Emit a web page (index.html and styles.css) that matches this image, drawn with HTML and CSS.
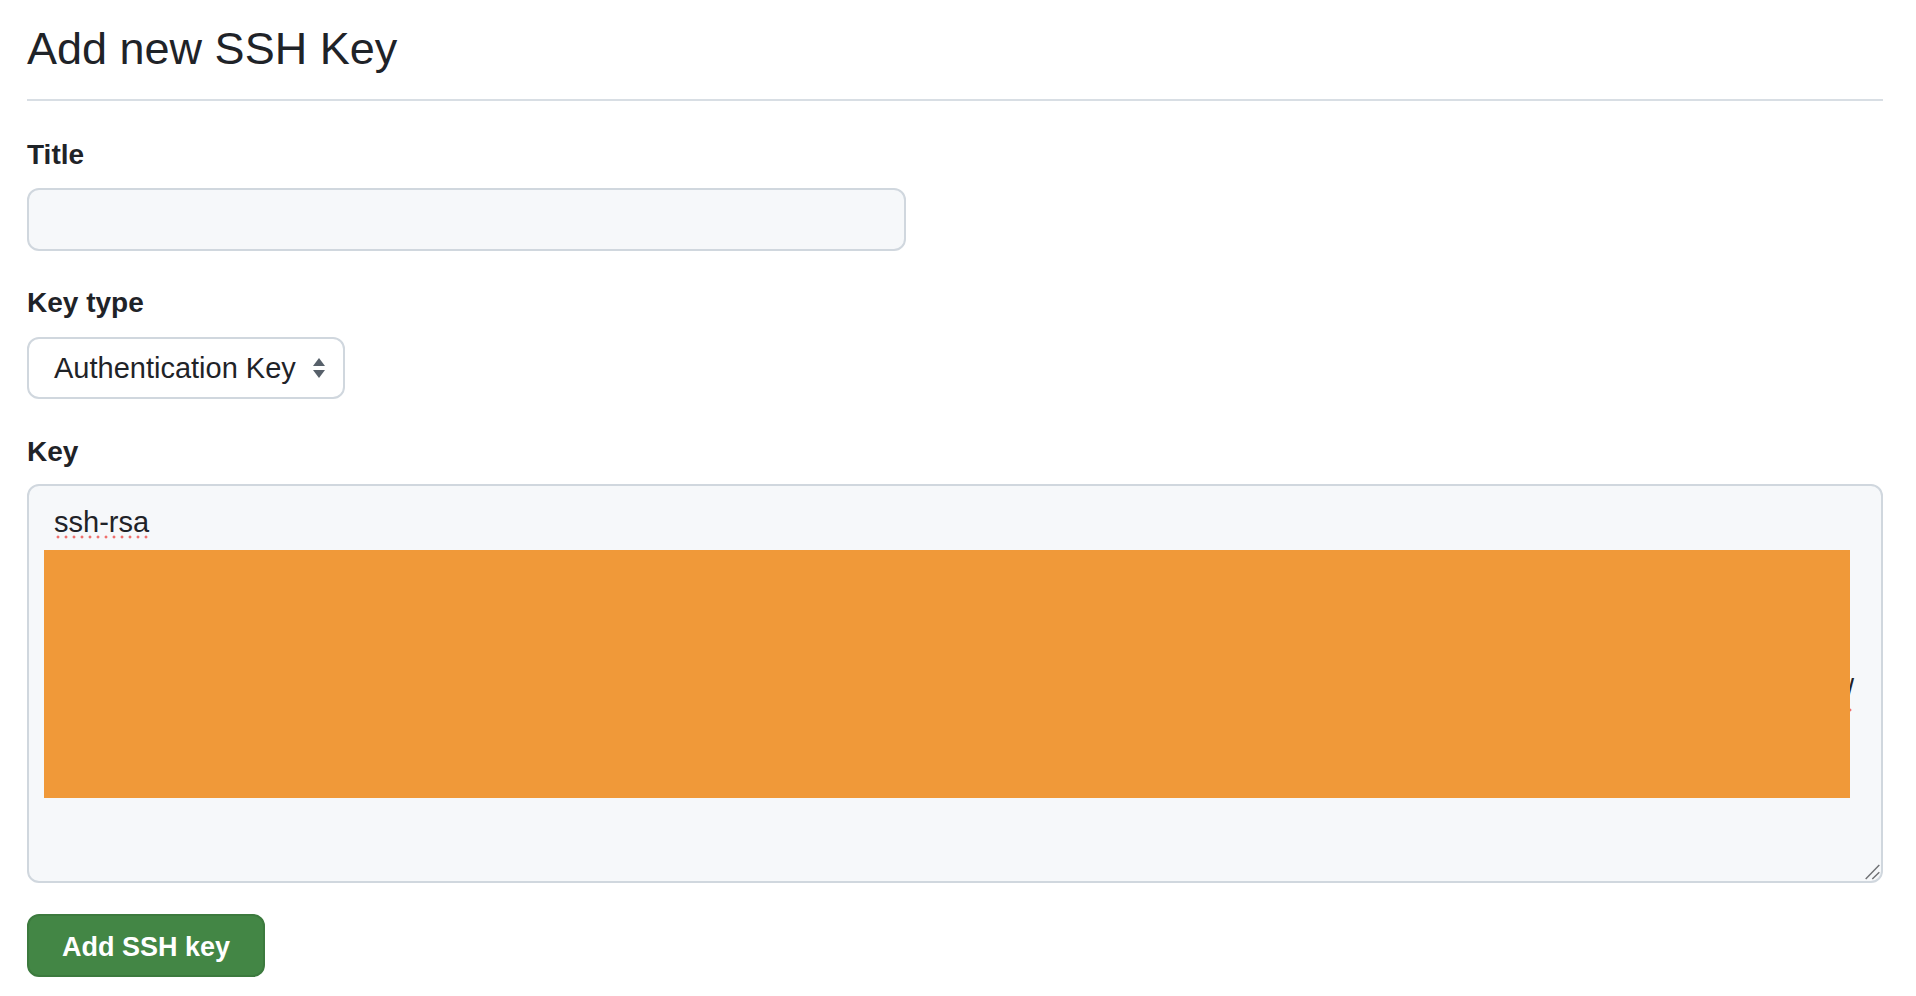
FILE: index.html
```html
<!DOCTYPE html>
<html lang="en">
<head>
<meta charset="utf-8">
<title>Add new SSH Key</title>
<link rel="stylesheet" href="styles.css">
</head>
<body>
<main class="page">
  <h2 class="subhead">Add new SSH Key</h2>
  <form class="form">
    <div class="group group-title">
      <label class="label">Title</label>
      <div class="input"></div>
    </div>
    <div class="group group-type">
      <label class="label">Key type</label>
      <div class="select">
        <span class="select-text">Authentication Key</span>
        <svg class="select-arrows" width="12" height="20" viewBox="0 0 12 20"><polygon points="6,0 12,8 0,8" fill="#57606a"/><polygon points="0,12 12,12 6,20" fill="#57606a"/></svg>
      </div>
    </div>
    <div class="group group-key">
      <label class="label">Key</label>
      <div class="textarea">
        <div class="textarea-line"><span class="spell">ssh-rsa</span></div>
        <span class="tail spell">/</span>
        <div class="redaction"></div>
        <svg class="resize" width="16" height="16" viewBox="0 0 16 16"><line x1="15.3" y1="1" x2="1.7" y2="15" stroke="#6e7073" stroke-width="1.4"/><line x1="15.3" y1="8.3" x2="8.3" y2="15" stroke="#6e7073" stroke-width="1.4"/></svg>
      </div>
    </div>
    <button type="button" class="btn">Add SSH key</button>
  </form>
</main>
</body>
</html>
```

FILE: styles.css
```css
html, body {
  margin: 0;
  padding: 0;
  background: #ffffff;
}
body {
  font-family: "Liberation Sans", Arial, sans-serif;
  color: #1f2328;
}
.page {
  padding: 0 33px 0 27px;
}
.subhead {
  margin: 0;
  padding: 21px 0 22px;
  font-size: 45px;
  line-height: 56px;
  font-weight: 400;
  color: #1f2328;
  border-bottom: 2px solid #d8dee4;
}
.form {
  display: flex;
  flex-direction: column;
  align-items: flex-start;
}
.group {
  display: flex;
  flex-direction: column;
  align-items: stretch;
  align-self: stretch;
}
.label {
  display: block;
  font-size: 28px;
  line-height: 40px;
  font-weight: 700;
  color: #1f2328;
}
.group-title { margin-top: 34px; }
.group-title .label { margin-bottom: 13px; }
.group-type { margin-top: 32px; }
.group-type .label { margin-bottom: 14px; }
.group-key { margin-top: 33px; }
.group-key .label { margin-bottom: 12px; }

.input {
  width: 879px;
  height: 63px;
  box-sizing: border-box;
  background: #f6f8fa;
  border: 2px solid #d0d7de;
  border-radius: 12px;
}
.select {
  width: 318px;
  height: 62px;
  box-sizing: border-box;
  display: flex;
  align-items: center;
  justify-content: space-between;
  padding: 0 18px 0 25px;
  background: #ffffff;
  border: 2px solid #d0d7de;
  border-radius: 12px;
}
.select-text {
  font-size: 29px;
  line-height: 42px;
  color: #1f2328;
}
.select-arrows {
  display: block;
  flex: none;
}
.textarea {
  position: relative;
  height: 399px;
  box-sizing: border-box;
  padding: 15px 25px;
  background: #f6f8fa;
  border: 2px solid #d0d7de;
  border-radius: 12px;
  font-size: 29px;
  line-height: 42px;
  color: #1f2328;
}
.spell {
  padding-bottom: 1px;
  background-image: radial-gradient(circle, #ef6f6c 1.3px, rgba(239, 111, 108, 0) 1.7px);
  background-size: 8px 4px;
  background-repeat: repeat-x;
  background-position: 0 100%;
}
.tail {
  position: absolute;
  left: 1817px;
  top: 183px;
  line-height: 42px;
}
.redaction {
  position: absolute;
  left: 15px;
  top: 64px;
  width: 1806px;
  height: 248px;
  background: #f09939;
}
.resize {
  position: absolute;
  right: 1px;
  bottom: 1px;
  display: block;
}
.btn {
  margin-top: 31px;
  width: 238px;
  height: 63px;
  box-sizing: border-box;
  padding: 2px 0 0;
  background: #438645;
  border: 2px solid #3c7a3e;
  border-radius: 12px;
  color: #ffffff;
  font-family: "Liberation Sans", Arial, sans-serif;
  font-size: 27px;
  line-height: 40px;
  font-weight: 700;
  cursor: pointer;
}
```
